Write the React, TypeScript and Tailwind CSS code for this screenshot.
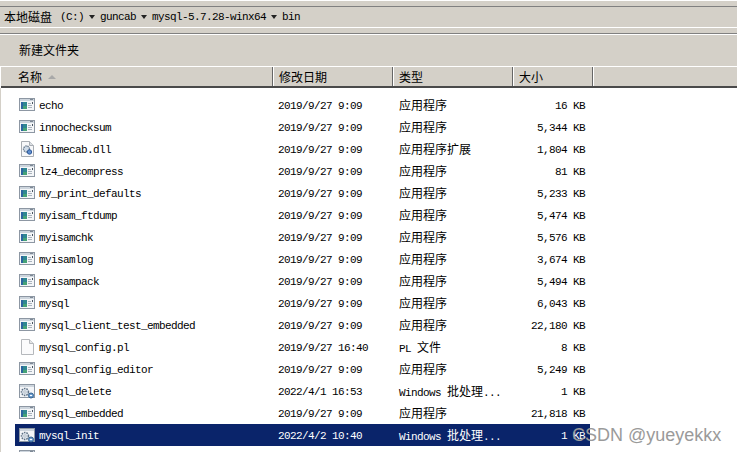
const files = [
  { name: "echo", date: "2019/9/27 9:09", type: "应用程序", size: "16 KB", icon: "exe" },
  { name: "innochecksum", date: "2019/9/27 9:09", type: "应用程序", size: "5,344 KB", icon: "exe" },
  { name: "libmecab.dll", date: "2019/9/27 9:09", type: "应用程序扩展", size: "1,804 KB", icon: "dll" },
  { name: "lz4_decompress", date: "2019/9/27 9:09", type: "应用程序", size: "81 KB", icon: "exe" },
  { name: "my_print_defaults", date: "2019/9/27 9:09", type: "应用程序", size: "5,233 KB", icon: "exe" },
  { name: "myisam_ftdump", date: "2019/9/27 9:09", type: "应用程序", size: "5,474 KB", icon: "exe" },
  { name: "myisamchk", date: "2019/9/27 9:09", type: "应用程序", size: "5,576 KB", icon: "exe" },
  { name: "myisamlog", date: "2019/9/27 9:09", type: "应用程序", size: "3,674 KB", icon: "exe" },
  { name: "myisampack", date: "2019/9/27 9:09", type: "应用程序", size: "5,494 KB", icon: "exe" },
  { name: "mysql", date: "2019/9/27 9:09", type: "应用程序", size: "6,043 KB", icon: "exe" },
  { name: "mysql_client_test_embedded", date: "2019/9/27 9:09", type: "应用程序", size: "22,180 KB", icon: "exe" },
  { name: "mysql_config.pl", date: "2019/9/27 16:40", type: "PL 文件", size: "8 KB", icon: "file" },
  { name: "mysql_config_editor", date: "2019/9/27 9:09", type: "应用程序", size: "5,249 KB", icon: "exe" },
  { name: "mysql_delete", date: "2022/4/1 16:53", type: "Windows 批处理...", size: "1 KB", icon: "bat" },
  { name: "mysql_embedded", date: "2019/9/27 9:09", type: "应用程序", size: "21,818 KB", icon: "exe" },
  { name: "mysql_init", date: "2022/4/2 10:40", type: "Windows 批处理...", size: "1 KB", icon: "bat", selected: true },
  { name: "", date: "", type: "", size: "", icon: "exe" },
];

// SimSun-like mix: half width latin next to full width CJK
const Mixed = ({ text }: { text: string }) => (
  <>
    {text.split(/([\u4e00-\u9fff]+)/).map((part, i) =>
      /[\u4e00-\u9fff]/.test(part) ? (
        <span key={i} className="font-['Noto_Sans_CJK_SC',sans-serif] text-[12px] tracking-normal">
          {part}
        </span>
      ) : (
        <span key={i}>{part}</span>
      )
    )}
  </>
);

const ExeIcon = () => (
  <svg width="16" height="13" viewBox="0 0 16 13" className="shrink-0">
    <rect x="0.5" y="0.5" width="15" height="12" fill="#f4f6f8" stroke="#8d97a3" />
    <rect x="1" y="1" width="14" height="2" fill="#cdd5dd" />
    <rect x="11" y="1" width="3" height="1" fill="#7d8895" />
    <rect x="2" y="4" width="6" height="7" fill="#2f8790" />
    <rect x="2" y="4" width="2" height="7" fill="#2c64a0" />
    <rect x="4" y="8" width="4" height="3" fill="#45a277" />
    <path d="M9 5.500h3M9 7.500h4M9 9.500h4" stroke="#aab3bd" />
    <path d="M13.500 4v2" stroke="#4a5664" />
  </svg>
);

const BatIcon = () => (
  <svg width="16" height="15" viewBox="0 0 16 15" className="shrink-0">
    <rect x="0.5" y="0.5" width="15" height="13" fill="#f3f5f8" stroke="#8d97a3" />
    <rect x="1" y="1" width="14" height="2" fill="#cdd5dd" />
    <circle cx="6" cy="8" r="3.500" fill="#dfe6ee" stroke="#5f7285" strokeWidth="1.500" strokeDasharray="1.500 1" />
    <circle cx="6" cy="8" r="1.200" fill="#ffffff" stroke="#8a9aaa" strokeWidth="0.600" />
    <circle cx="12" cy="11.500" r="2.500" fill="#6f9fd0" stroke="#33628f" />
    <path d="M11 11.500h2" stroke="#ffffff" />
  </svg>
);

const DllIcon = () => (
  <svg width="13" height="16" viewBox="0 0 13 16" className="shrink-0">
    <path d="M0.500 0.500H8.500L12.500 4.500V15.500H0.500Z" fill="#f7f8fa" stroke="#a8adb3" />
    <path d="M8.500 0.500V4.500H12.500" fill="#dde1e5" stroke="#a8adb3" />
    <circle cx="5.500" cy="8" r="3" fill="#cfdbe8" stroke="#5f7285" strokeWidth="1.300" strokeDasharray="1.300 0.800" />
    <circle cx="8.500" cy="11" r="2.200" fill="#5f8fcf" stroke="#2f5a9a" />
  </svg>
);

const PlainFileIcon = () => (
  <svg width="13" height="16" viewBox="0 0 13 16" className="shrink-0">
    <path d="M0.500 0.500H8.500L12.500 4.500V15.500H0.500Z" fill="#fbfbfc" stroke="#b5b8bc" />
    <path d="M8.500 0.500V4.500H12.500" fill="#e4e6e8" stroke="#b5b8bc" />
  </svg>
);

const FileIcon = ({ kind }: { kind: string }) => {
  if (kind === "bat") return <BatIcon />;
  if (kind === "dll") return <DllIcon />;
  if (kind === "file") return <PlainFileIcon />;
  return <ExeIcon />;
};

const Crumb = () => (
  <span className="mx-[5px] h-0 w-0 border-x-[3px] border-t-[4px] border-x-transparent border-t-[#222]" />
);

const HeaderCell = ({ label, width, sorted }: { label: string; width: string; sorted?: boolean }) => (
  <div className={`${width} flex h-full items-center gap-[6px] border-r border-r-[#666] shadow-[1px_0_0_#fff] pl-[6px] text-[12px] text-black font-['Noto_Sans_CJK_SC',sans-serif]`}>
    {label}
    {sorted && <span className="h-0 w-0 border-x-[4px] border-b-[4px] border-x-transparent border-b-[#a8a8a8]" />}
  </div>
);

export default function App() {
  return (
    <div className="relative flex h-[452px] w-[737px] flex-col overflow-hidden bg-white font-['Liberation_Mono',monospace] text-[11px] tracking-[-0.6px] text-black">
      <div className="h-px shrink-0 bg-white" />
      <div className="box-content h-[5px] shrink-0 border-b border-[#808080] bg-[#d4d0c8]" />
      <div className="box-content flex h-[20px] shrink-0 items-center border-b border-white bg-[#d4d0c8] pl-[4px]">
        <span className="font-['Noto_Sans_CJK_SC',sans-serif] text-[12px] tracking-normal">本地磁盘</span>
        <span className="ml-[8px]">(C:)</span>
        <Crumb />
        <span>guncab</span>
        <Crumb />
        <span>mysql-5.7.28-winx64</span>
        <Crumb />
        <span>bin</span>
      </div>
      <div className="box-content h-[5px] shrink-0 border-b border-[#808080] bg-[#d4d0c8]" />
      <div className="flex h-[32px] shrink-0 items-center border-t border-white bg-[#d4d0c8] pb-[2px] pl-[19px] font-['Noto_Sans_CJK_SC',sans-serif] text-[12px] tracking-normal">
        新建文件夹
      </div>
      <div className="ml-px flex h-[22px] shrink-0 border-t border-b-2 border-t-white border-b-[#4a4a4a] bg-[#d4d0c8] tracking-normal">
        <div className="w-[11px]" />
        <HeaderCell label="名称" width="w-[261px]" sorted />
        <HeaderCell label="修改日期" width="w-[120px]" />
        <HeaderCell label="类型" width="w-[120px]" />
        <HeaderCell label="大小" width="w-[80px]" />
      </div>
      <div className="flex flex-1 flex-col border-l border-[#d4d0c8] pt-[6px] pl-[14px]">
        {files.map((file, i) => (
          <div
            key={i}
            className={`grid h-[22px] w-[575px] shrink-0 grid-cols-[258px_121px_120px_71px] items-center pt-[2px] ${file.selected ? "bg-[#0a246a] text-white" : ""}`}
          >
            <div className="flex items-center">
              <div className={`flex h-[18px] w-[24px] shrink-0 items-start pl-[4px] ${file.icon === "exe" || file.icon === "bat" ? "pt-[1px]" : ""}`}>
                <div className="flex w-[16px] justify-center">
                  <FileIcon kind={file.icon} />
                </div>
              </div>
              <span>{file.name}</span>
            </div>
            <span className="pl-[5px]">{file.date}</span>
            <span className="pl-[5px]">
              <Mixed text={file.type} />
            </span>
            <span className="text-right">{file.size}</span>
          </div>
        ))}
      </div>
      <span className="absolute left-[572px] top-[422px] font-['Liberation_Sans',sans-serif] text-[18px] tracking-normal text-[#9a9a9a]">
        CSDN @yueyekkx
      </span>
    </div>
  );
}
